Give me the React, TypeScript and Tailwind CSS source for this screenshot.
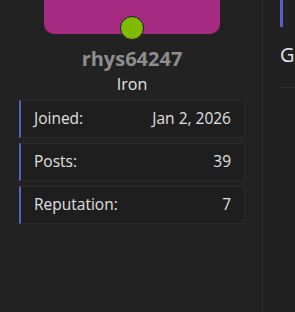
import React from 'react';

const stats = [
  { label: 'Joined:', value: 'Jan 2, 2026' },
  { label: 'Posts:', value: '39' },
  { label: 'Reputation:', value: '7' },
];

const App = () => {
  return (
    <div
      className="flex h-[312px] w-[295px] overflow-hidden bg-[#212121]"
      style={{ fontFamily: '"Open Sans", "Noto Sans", sans-serif' }}
    >
      <div className="flex w-[263px] shrink-0 flex-col items-center border-r border-[#2a2a2a] bg-[#222222] pl-[19px] pr-[17px]">
        <div className="h-[34px] w-[176px] rounded-b-[10px] bg-[#a52a82]"></div>
        <div className="-mt-[18px] h-[24px] w-[24px] rounded-full border border-[#1c1c1c] bg-[#7fba00]"></div>
        <div className="mt-[7px] text-[20px] font-bold leading-[24px] text-[#8e8e8e]">rhys64247</div>
        <div className="mt-[3px] text-[16px] leading-[20px] text-[#e6e6e6]">Iron</div>

        <div className="mt-[6px] flex w-full flex-col gap-[5px]">
          {stats.map((s) => (
            <div
              key={s.label}
              className="flex h-[38px] items-center justify-between border border-l-2 border-[#2a2a2a] border-l-[#5563c1] bg-[#1e1e1e] pl-[13px] pr-[13px] text-[15.5px] text-[#e0e0e0]"
            >
              <span>{s.label}</span>
              <span>{s.value}</span>
            </div>
          ))}
        </div>
      </div>

      <div className="flex flex-1 flex-col pl-[17px]">
        <div className="h-[27px] w-[3px] bg-[#5563c1]"></div>
        <div className="mt-[16px] text-[20px] leading-[24px] text-[#e6e6e6]">Groups</div>
        <div className="mt-[20px] border-t border-[#2e2e2e]"></div>
      </div>
    </div>
  );
};

export default App;
